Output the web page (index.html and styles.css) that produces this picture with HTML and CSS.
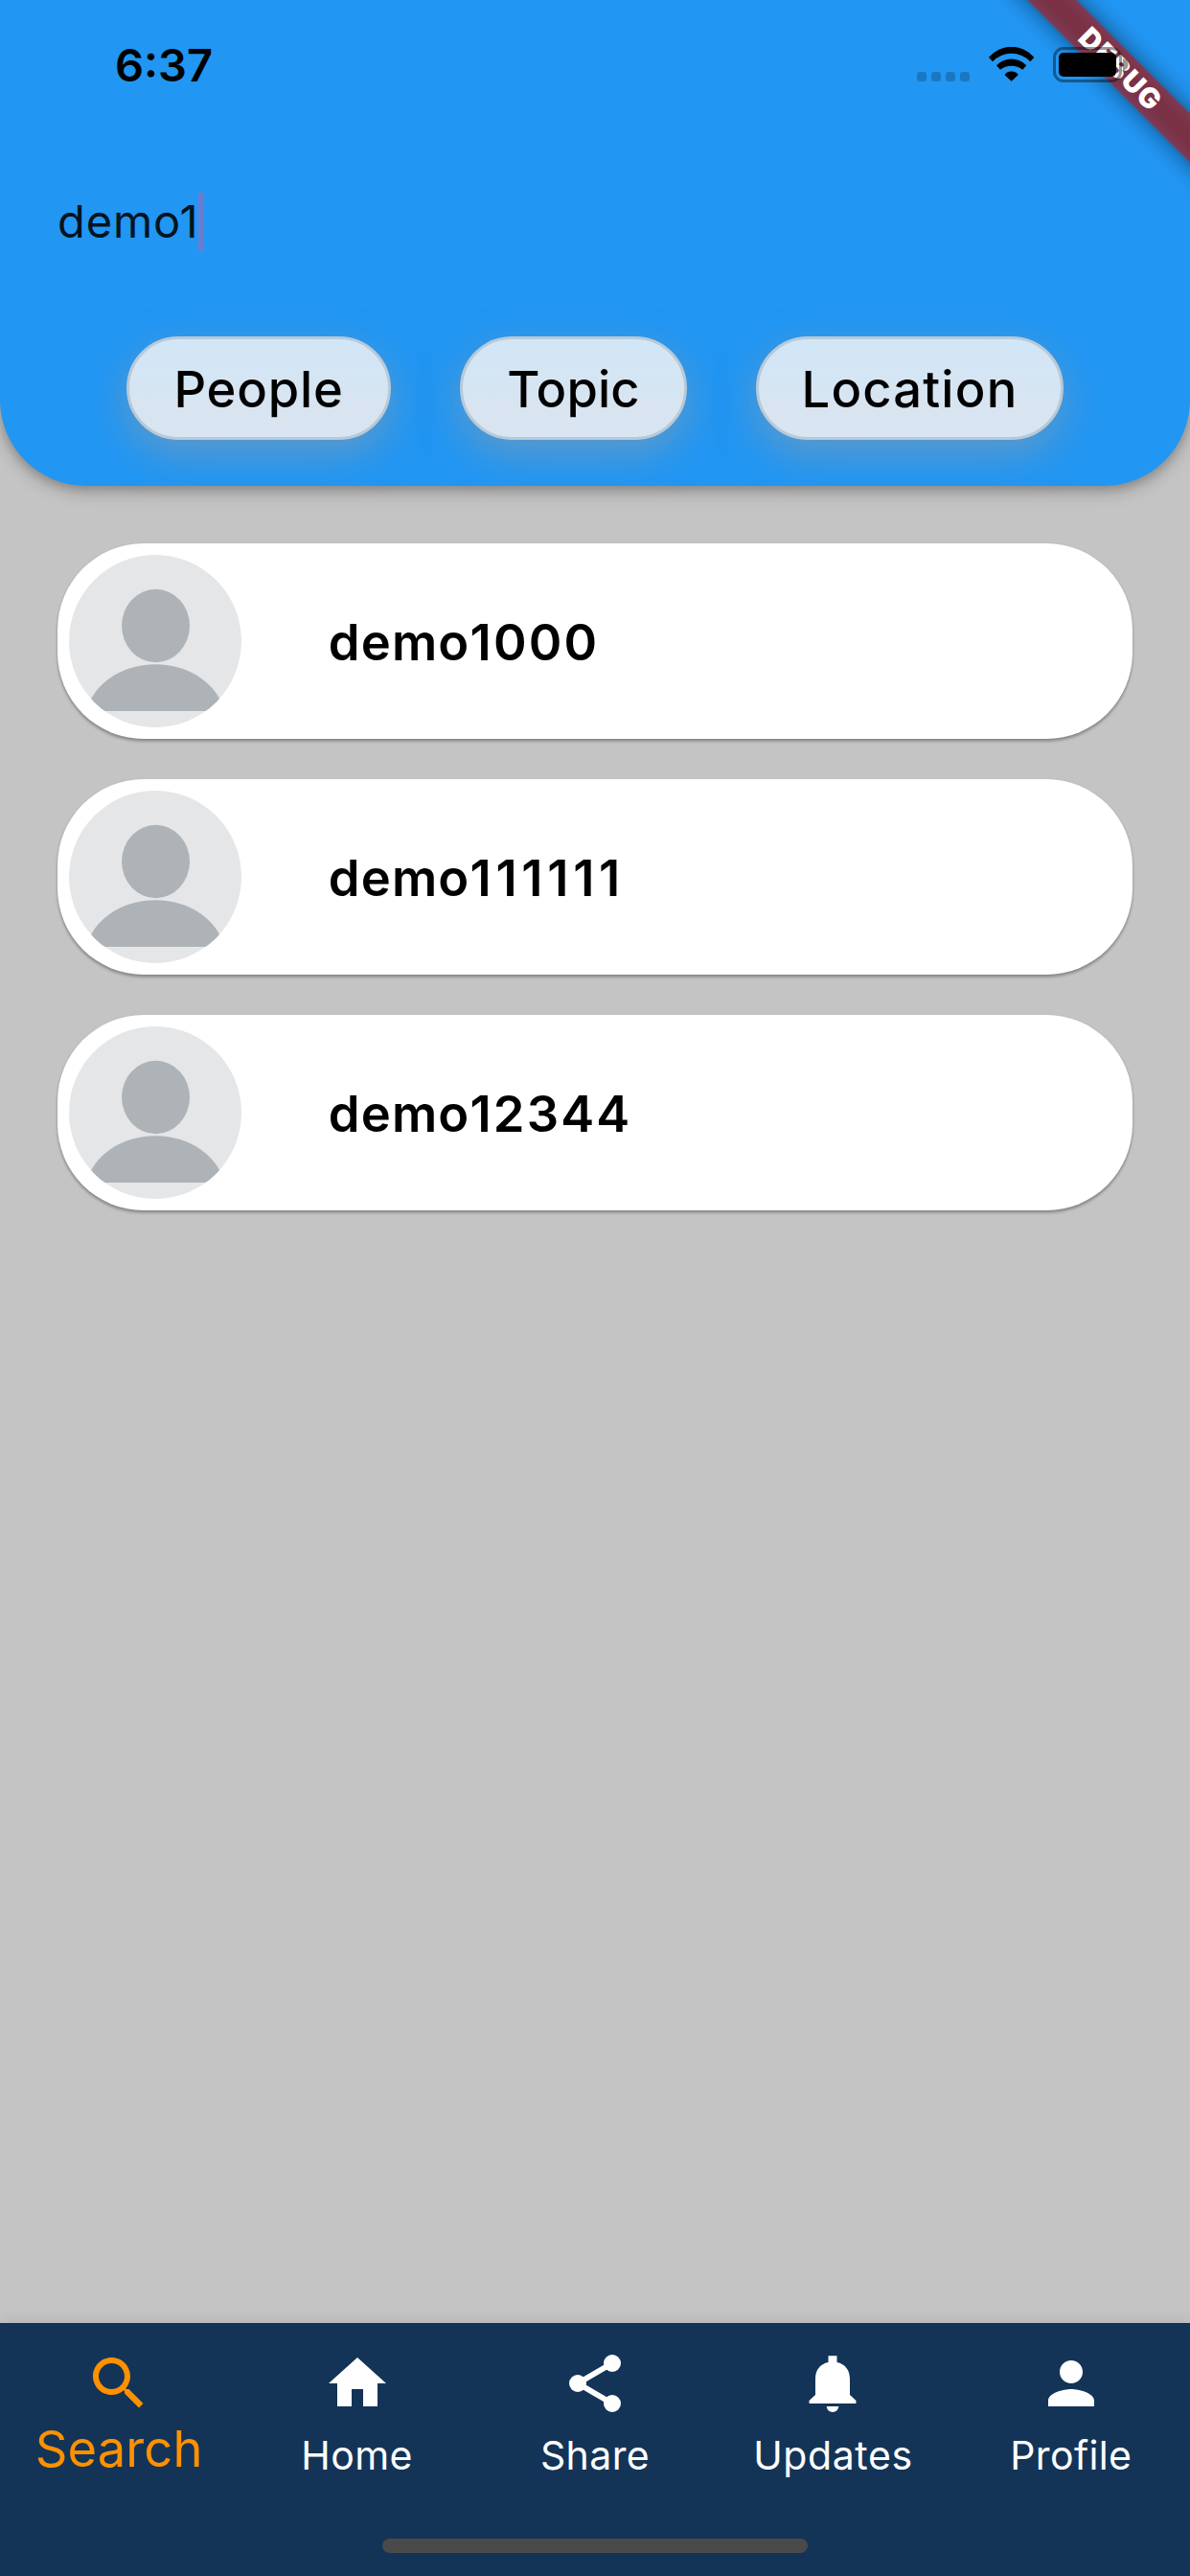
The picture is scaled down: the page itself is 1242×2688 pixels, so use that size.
FILE: index.html
```html
<!DOCTYPE html>
<html lang="en">
<head>
<meta charset="utf-8">
<title>Search</title>
<link rel="stylesheet" href="styles.css">
</head>
<body>
<svg class="defs" width="0" height="0">
  <symbol id="avatar" viewBox="0 0 180 180">
    <rect width="180" height="180" fill="#e4e6e8"/>
    <ellipse cx="90.5" cy="74" rx="35.5" ry="38.2" fill="#aeb3b7"/>
    <path d="M18.5 163C24 136 54 114.3 90.3 114.3S156 136 162 163Z" fill="#aeb3b7"/>
  </symbol>
</svg>
<div class="screen">
  <header class="header">
    <div class="status">
      <div class="time">6:37</div>
      <div class="indicators">
        <div class="signal"><i></i><i></i><i></i><i></i></div>
        <svg class="wifi" viewBox="0 0 142 107">
          <path d="M0 32A92.6 92.6 0 0 1 142 32L130 45A82 82 0 0 0 12 45Z"/>
          <path d="M24 57A65 65 0 0 1 118 57L106 71A55 55 0 0 0 36 71Z"/>
          <path d="M50 87Q51 84 56 80Q71 72 86 80Q91 84 92 87L71 107Z"/>
        </svg>
        <svg class="battery" viewBox="0 0 79 37">
          <rect x="1.5" y="1.5" width="69" height="34" rx="9.5" fill="none" stroke="#000" stroke-opacity=".4" stroke-width="3"/>
          <rect x="6" y="6" width="60" height="25" rx="5"/>
          <path d="M73 12Q78.500 14 78.500 18.500T73 25Z" fill-opacity=".4"/>
        </svg>
      </div>
    </div>
    <div class="field"><span class="query">demo1</span><span class="caret"></span></div>
    <div class="chips">
      <div class="chip people">People</div>
      <div class="chip topic">Topic</div>
      <div class="chip location">Location</div>
    </div>
    <div class="ribbon"><span>DEBUG</span></div>
  </header>
  <main class="results">
    <div class="card"><svg class="avatar"><use href="#avatar"/></svg><div class="name">demo<span class="zeros">1000</span></div></div>
    <div class="card"><svg class="avatar"><use href="#avatar"/></svg><div class="name">demo<span class="ones">111111</span></div></div>
    <div class="card"><svg class="avatar"><use href="#avatar"/></svg><div class="name">demo<span class="mixed">12344</span></div></div>
  </main>
  <nav class="nav">
    <div class="tabs">
      <div class="tab active"><svg viewBox="0 0 24 24"><path d="M15.500 14h-.79l-.28-.27C15.410 12.590 16 11.110 16 9.500 16 5.910 13.090 3 9.500 3S3 5.910 3 9.500 5.910 16 9.500 16c1.610 0 3.090-.59 4.230-1.570l.27.28v.79l5 4.990L20.490 19l-4.990-5zm-6 0C7.010 14 5 11.990 5 9.500S7.010 5 9.500 5 14 7.010 14 9.500 11.990 14 9.500 14z"/></svg><span>Search</span></div>
      <div class="tab"><svg viewBox="0 0 24 24"><path d="M10 20v-6h4v6h5v-8h3L12 3 2 12h3v8z"/></svg><span>Home</span></div>
      <div class="tab"><svg viewBox="0 0 24 24"><path d="M6 12L18 5M6 12L18 19" fill="none" stroke="currentColor" stroke-width="2"/><circle cx="18" cy="5" r="3"/><circle cx="6" cy="12" r="3"/><circle cx="18" cy="19" r="3"/></svg><span>Share</span></div>
      <div class="tab updates"><svg viewBox="0 0 24 24"><path d="M9.900 20h4.200a2.100 2 0 0 1-4.200 0zM18 16v-5.500c0-3.070-1.640-5.240-4.500-5.820V2.400h-3V4.680C7.630 5.260 6 7.420 6 10.500V16l-2.150 2v1h16.300v-1z"/></svg><span>Updates</span></div>
      <div class="tab"><svg viewBox="0 0 24 24"><path d="M12 12c2.210 0 4-1.790 4-4s-1.790-4-4-4-4 1.790-4 4 1.790 4 4 4zm0 2c-2.670 0-8 1.340-8 4v2h16v-2c0-2.660-5.330-4-8-4z"/></svg><span>Profile</span></div>
    </div>
    <div class="home-bar"></div>
  </nav>
</div>
</body>
</html>
```
FILE: styles.css
```css
* { box-sizing: border-box; }
body { margin: 0; background: #c4c4c4; font-family: Inter, "Liberation Sans", sans-serif; color: #000; }
.defs { display: none; }
.screen { display: flex; flex-direction: column; width: 1242px; height: 2688px; overflow: hidden; background: #c4c4c4; }

.header { position: relative; height: 507px; background: #2196f3; border-radius: 0 0 90px 90px; box-shadow: 0 6px 15px rgba(0,0,0,.16), 0 3px 10px rgba(0,0,0,.14), 0 6px 24px rgba(0,0,0,.08); }
.status { position: relative; z-index: 2; display: flex; justify-content: space-between; height: 136px; padding: 0 64px 0 120px; }
.time { font-size: 47px; font-weight: 600; line-height: 136px; }
.indicators { display: flex; align-items: flex-start; padding-top: 49px; }
.signal { display: flex; gap: 5px; margin: 26px 20px 0 0; }
.signal i { width: 10px; height: 10px; border-radius: 3px; background: rgba(0,0,0,.2); }
.wifi { width: 47.300px; height: 36px; margin-right: 19.700px; }
.battery { width: 79px; height: 37px; }

.field { display: flex; align-items: center; height: 190px; padding-left: 60px; }
.query { font-size: 47px; line-height: 60px; letter-spacing: .9px; color: #031420; }
.caret { width: 6px; height: 63px; margin-left: -.6px; border-radius: 3px; background: #687dd0; }

.chips { display: flex; justify-content: center; gap: 72px; padding-top: 25px; }
.chip { height: 108px; padding-top: 1px; border: 3px solid #b9c9d6; border-radius: 54px; background: linear-gradient(#d1e6f7, #d5e5f3 40%, #d9e4f0 75%, #d8e5f2); box-shadow: 0 15px 42px rgba(158,158,158,.5); font-size: 52.500px; font-weight: 500; line-height: 102px; text-align: center; }
.people { width: 276px; letter-spacing: .78px; }
.topic { width: 237px; letter-spacing: .1px; }
.location { width: 321px; letter-spacing: 1.170px; }

/* Diagonal corner banner, centred 102px in from the top-right corner */
.ribbon { position: absolute; z-index: 1; top: 0; right: 0; width: 240px; height: 240px; overflow: hidden; }
.ribbon::before, .ribbon span { position: absolute; left: -82px; top: 54px; width: 500px; height: 36px; transform: rotate(45deg); }
.ribbon::before { content: ""; background: rgba(0,0,0,.5); filter: blur(12px); }
.ribbon span { background: rgba(183,28,28,.63); color: #fff; font-size: 29.500px; font-weight: 900; line-height: 36px; letter-spacing: 1.200px; text-align: center; }

.results { flex: 1; display: flex; flex-direction: column; gap: 42px; padding: 60px; }
.card { display: flex; gap: 90.700px; height: 204px; padding: 12px; border-radius: 90px; background: #fff; box-shadow: 0 3px 3px rgba(0,0,0,.22), 0 1px 3px rgba(0,0,0,.16); }
.avatar { width: 180px; height: 180px; border-radius: 50%; }
.name { padding-top: 1px; font-size: 52.500px; font-weight: 600; line-height: 180px; letter-spacing: 1.200px; }
.zeros { letter-spacing: 2.200px; }
.ones { letter-spacing: 4.700px; }
.mixed { letter-spacing: 2.100px; }

.nav { display: flex; flex-direction: column; align-items: center; justify-content: space-between; height: 264px; padding: 27px 0 24px; background: #133457; box-shadow: 0 -4px 12px rgba(0,0,0,.06); }
.tabs { display: grid; grid-template-columns: repeat(5, 1fr); width: 100%; }
.tab { display: flex; flex-direction: column; align-items: center; color: #fff; font-size: 41px; line-height: 78px; letter-spacing: .4px; }
.tab svg { width: 72px; height: 72px; fill: currentColor; }
.updates { letter-spacing: .6px; }
.active { color: #ff9100; font-size: 52.500px; line-height: 64px; letter-spacing: .1px; }
.home-bar { width: 444px; height: 15px; border-radius: 8px; background: #4a4a4a; }
```
